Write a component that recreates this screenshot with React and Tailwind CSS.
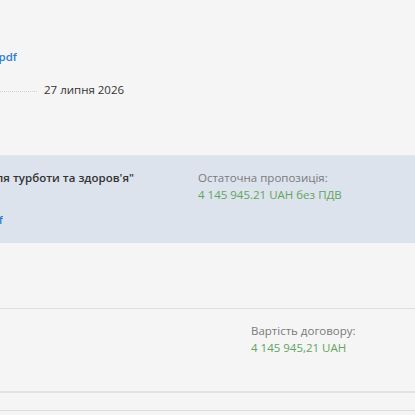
import clsx from 'clsx';

// Text block that is cut off by the left edge of the view: keeps the tail visible.
function Cut({ w, className, children }) {
  return (
    <div className={clsx('flex justify-end overflow-hidden whitespace-nowrap', w, className)}>
      <span className="shrink-0">{children}</span>
    </div>
  );
}

export default function App() {
  return (
    <div
      className="w-[415px] h-[415px] overflow-hidden bg-[#f5f5f5] text-[11.5px] leading-[17px] text-[#333]"
      style={{ fontFamily: '"Open Sans", "Noto Sans", sans-serif' }}
    >
      {/* documents + date */}
      <div className="pt-[48px]">
        <Cut w="w-[17px]" className="font-semibold text-[#2f7dd1]">
          Протокол розкриття.pdf
        </Cut>
        <div className="mt-[16px] flex items-center">
          <div className="w-[37px] mt-[4px] border-b border-dotted border-[#cfcfcf]" />
          <span className="ml-[7px]">27 липня 2026</span>
        </div>
      </div>

      {/* winner offer */}
      <div className="mt-[57px] h-[88px] bg-[#dce3ed] border-t border-[#e6e9ef] flex pt-[13px]">
        <div className="w-[198px] shrink-0">
          <Cut w="w-[134px]" className="font-semibold">
            ТОВ "Центр для турботи та здоров'я"
          </Cut>
          <Cut w="w-[3px]" className="mt-[25px] font-semibold text-[#2f7dd1]">
            Пропозиція.pdf
          </Cut>
        </div>
        <div>
          <div className="text-[#7a7a7a]">Остаточна пропозиція:</div>
          <div className="text-[#62a35f]">4 145 945.21 UAH без ПДВ</div>
        </div>
      </div>

      {/* contract */}
      <div className="mt-[65px] border-t border-[#dedede]">
        <div className="h-[82px] pl-[251px] pt-[13px]">
          <div className="text-[#7a7a7a]">Вартість договору:</div>
          <div className="text-[#62a35f]">4 145 945,21 UAH</div>
        </div>
        <div className="h-[19px] border-t-2 border-[#e2e2e2]" />
        <div className="border-t border-[#dedede]" />
      </div>
    </div>
  );
}
